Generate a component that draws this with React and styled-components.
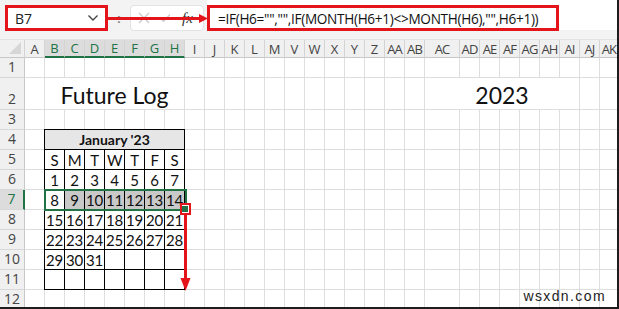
import React from "react";
import styled, { createGlobalStyle, css } from "styled-components";

const GlobalStyle = createGlobalStyle`
  html, body { margin: 0; padding: 0; background: #fff; }
  * { box-sizing: border-box; }
`;

const RED = "#e3151b";
const GREEN = "#217346";
const GRID = "#dedede";

const COLS = [
  ["A", 20], ["B", 20], ["C", 20], ["D", 20], ["E", 20], ["F", 20], ["G", 20], ["H", 20],
  ["I", 20], ["J", 20], ["K", 20], ["L", 20], ["M", 20], ["V", 20], ["W", 20], ["X", 20],
  ["Y", 20], ["Z", 20], ["AA", 20], ["AB", 20], ["AC", 35], ["AD", 20], ["AE", 20],
  ["AF", 20], ["AG", 20], ["AH", 20], ["AI", 20], ["AJ", 20], ["AK", 19],
];
const ROWS = [[1, 20], [2, 32], [3, 20], [4, 20], [5, 20], [6, 20], [7, 20], [8, 20], [9, 20], [10, 20], [11, 20], [12, 20]];
const SELECTED_COLS = ["B", "C", "D", "E", "F", "G", "H"];

const CAL = [
  ["S", "M", "T", "W", "T", "F", "S"],
  [1, 2, 3, 4, 5, 6, 7],
  [8, 9, 10, 11, 12, 13, 14],
  [15, 16, 17, 18, 19, 20, 21],
  [22, 23, 24, 25, 26, 27, 28],
  [29, 30, 31, "", "", "", ""],
  ["", "", "", "", "", "", ""],
];

const Frame = styled.div`
  width: 619px;
  height: 309px;
  overflow: hidden;
  position: relative;
  border-right: 2px solid #1d1d1d;
  border-bottom: 2px solid #1d1d1d;
  background: #fff;
`;

/* formula bar */
const Bar = styled.div`
  position: relative;
  height: 40px;
  display: flex;
  align-items: flex-start;
  padding: 5px 0 0 5px;
  background: #f3f3f3;
  border-bottom: 1px solid #e2e2e2;
`;

const NameBox = styled.div`
  width: 103px;
  height: 26px;
  border: 3px solid ${RED};
  background: #fff;
  display: flex;
  align-items: center;
  justify-content: space-between;
  padding: 0 6px 0 7px;
  font: 14px "Open Sans", sans-serif;
  color: #222;
`;

const Sep = styled.div`
  width: 22px;
  height: 26px;
  display: flex;
  align-items: center;
  justify-content: center;
  color: #888;
  font: bold 13px "Liberation Sans", sans-serif;
`;

const FnBox = styled.div`
  width: 74px;
  height: 26px;
  background: #fff;
  border: 1px solid #e3e3e3;
  border-radius: 4px;
  display: flex;
  align-items: center;
  gap: 9px;
  padding-left: 7px;
`;

const Fx = styled.span`
  font: italic 15px "Liberation Serif", serif;
  color: #333;
  margin-left: 2px;
`;

const FormulaArea = styled.div`
  flex: 1;
  height: 30px;
  margin-left: 3px;
  margin-top: -5px;
  padding-top: 5px;
  background: #fff;
`;

const FormulaBox = styled.div`
  width: 352px;
  height: 26px;
  border: 3px solid ${RED};
  display: flex;
  align-items: center;
  padding-left: 8px;
  font: 13.6px "Open Sans", sans-serif;
  color: #111;
  white-space: nowrap;
  letter-spacing: -0.3px;
`;

const Overlay = styled.svg`
  position: absolute;
  left: ${(p) => p.$x}px;
  top: ${(p) => p.$y}px;
  overflow: visible;
  pointer-events: none;
`;

/* sheet */
const Sheet = styled.div`
  position: relative;
  display: grid;
  grid-template-columns: 25px ${COLS.map((c) => `${c[1]}px`).join(" ")};
  grid-template-rows: 18px ${ROWS.map((r) => `${r[1]}px`).join(" ")};
`;

const Corner = styled.div`
  background: #f0f0f0;
  border-right: 1px solid #d4d4d4;
  border-bottom: 1px solid #c8c8c8;
  position: relative;
`;

const ColHead = styled.div`
  background: #f0f0f0;
  border-right: 1px solid #d4d4d4;
  border-bottom: 1px solid #c8c8c8;
  display: flex;
  align-items: center;
  justify-content: center;
  font: 13px "Open Sans", sans-serif;
  letter-spacing: ${(p) => (p.$wide ? "-0.9px" : "0")};
  color: #444;
  overflow: hidden;
  white-space: nowrap;
  ${(p) =>
    p.$active &&
    css`
      background: #dcdcdc;
      color: ${GREEN};
      border-bottom: 2px solid ${GREEN};
    `}
`;

const RowHead = styled.div`
  background: #f0f0f0;
  border-right: 1px solid #c8c8c8;
  border-bottom: 1px solid #d8d8d8;
  display: flex;
  align-items: flex-end;
  justify-content: center;
  padding-bottom: 1px;
  font: 14px "Open Sans", sans-serif;
  color: #444;
  ${(p) =>
    p.$active &&
    css`
      background: #dcdcdc;
      color: ${GREEN};
      border-right: 2px solid ${GREEN};
    `}
`;

const Cell = styled.div`
  border-right: 1px solid ${GRID};
  border-bottom: 1px solid ${GRID};
  grid-column: span ${(p) => p.$span || 1};
  display: flex;
  align-items: center;
  justify-content: center;
  white-space: nowrap;
`;

const Title = styled.span`
  font: 23px "Lato", "Open Sans", sans-serif;
  color: #111;
  padding-top: 2px;
`;

const Calendar = styled.div`
  grid-column: 3 / span 7;
  grid-row: 5 / span 8;
  margin: -1px 0 0 -1px;
  position: relative;
  display: grid;
  grid-template-columns: repeat(7, 1fr);
  grid-template-rows: repeat(8, 1fr);
  border-top: 1px solid #000;
  border-left: 1px solid #000;
`;

const CalHead = styled.div`
  grid-column: span 7;
  background: #e7e6e6;
  border-right: 1px solid #000;
  border-bottom: 1px solid #000;
  display: flex;
  align-items: center;
  justify-content: center;
  font: bold 14px "Lato", "Open Sans", sans-serif;
  color: #111;
`;

const CalCell = styled.div`
  border-right: 1px solid #000;
  border-bottom: 1px solid #000;
  display: flex;
  align-items: center;
  justify-content: center;
  font: 15px "Lato", "Open Sans", sans-serif;
  color: #111;
  letter-spacing: -0.3px;
  background: ${(p) => (p.$sel ? "#c9c9c9" : "#fff")};
`;

const Selection = styled.div`
  position: absolute;
  left: -1px;
  top: 59px;
  width: 143px;
  height: 22px;
  border: 2px solid ${GREEN};
  pointer-events: none;
`;

const Handle = styled.div`
  position: absolute;
  left: 137px;
  top: 76px;
  width: 6px;
  height: 6px;
  background: ${GREEN};
  outline: 1px solid #fff;
`;

const Watermark = styled.div`
  position: absolute;
  right: 11px;
  bottom: 3px;
  font: 14px "Liberation Sans", sans-serif;
  letter-spacing: 1.4px;
  color: #222;
`;

const Chevron = () => (
  <svg width="12" height="8" viewBox="0 0 12 8">
    <path d="M1.5 1.5 L6 6 L10.5 1.5" fill="none" stroke="#444" strokeWidth="1.4" />
  </svg>
);

const CrossIcon = () => (
  <svg width="12" height="12" viewBox="0 0 12 12">
    <path d="M1 1 L11 11 M11 1 L1 11" stroke="#c9c9c9" strokeWidth="1.2" />
  </svg>
);

const CheckIcon = () => (
  <svg width="12" height="10" viewBox="0 0 12 10">
    <path d="M1 5 L4.5 8.5 L11 1.5" fill="none" stroke="#c9c9c9" strokeWidth="1.2" />
  </svg>
);

function renderRow([num]) {
  const out = [
    <RowHead key="h" $active={num === 7}>{num}</RowHead>,
  ];
  COLS.forEach(([col], i) => {
    const inCalendar = num >= 4 && num <= 11 && i >= 1 && i <= 7;
    if (inCalendar) return;
    if (num === 2 && i >= 2 && i <= 7) return;
    if (num === 2 && i === 1) {
      out.push(
        <Cell key={col} $span={7}>
          <Title>Future Log</Title>
        </Cell>
      );
      return;
    }
    if (num === 2 && col === "AC") {
      out.push(
        <Cell key={col} $span={7}>
          <Title>2023</Title>
        </Cell>
      );
      return;
    }
    if (num === 2 && ["AD", "AE", "AF", "AG", "AH", "AI"].includes(col)) return;
    out.push(<Cell key={col} />);
  });
  return <React.Fragment key={num}>{out}</React.Fragment>;
}

export default function App() {
  return (
    <>
      <GlobalStyle />
      <Frame>
        <Bar>
          <NameBox>
            <span>B7</span>
            <Chevron />
          </NameBox>
          <Sep>:</Sep>
          <FnBox>
            <CrossIcon />
            <CheckIcon />
            <Fx>fx</Fx>
          </FnBox>
          <FormulaArea>
            <FormulaBox>=IF(H6="","",IF(MONTH(H6+1)&lt;&gt;MONTH(H6),"",H6+1))</FormulaBox>
          </FormulaArea>
          <Overlay $x={108} $y={15} width="100" height="8">
            <line x1="0" y1="3.5" x2="93" y2="3.5" stroke={RED} strokeWidth="3" />
            <path d="M91 -1 L100 3.5 L91 8 Z" fill={RED} />
          </Overlay>
        </Bar>

        <Sheet>
          <Corner>
            <svg width="12" height="12" viewBox="0 0 12 12" style={{ position: "absolute", right: 3, bottom: 3 }}>
              <path d="M12 0 L12 12 L0 12 Z" fill="#d6d6d6" />
            </svg>
          </Corner>
          {COLS.map(([col]) => (
            <ColHead key={col} $wide={col.length > 1} $active={SELECTED_COLS.includes(col)}>{col}</ColHead>
          ))}
          {ROWS.map(renderRow)}

          <Calendar>
            <CalHead>January '23</CalHead>
            {CAL.map((week, r) =>
              week.map((d, c) => (
                <CalCell key={`${r}-${c}`} $sel={r === 2 && c > 0}>{d}</CalCell>
              ))
            )}
            <Selection />
            <Handle />
          </Calendar>

          <Overlay $x={180} $y={163} width="12" height="90">
            <rect x="1" y="1" width="9" height="10" fill="none" stroke={RED} strokeWidth="2" />
            <line x1="5.5" y1="11" x2="5.5" y2="78" stroke={RED} strokeWidth="3" />
            <path d="M0.5 75 L10.5 75 L5.5 88 Z" fill={RED} />
          </Overlay>
        </Sheet>
        <Watermark>wsxdn.com</Watermark>
      </Frame>
    </>
  );
}
